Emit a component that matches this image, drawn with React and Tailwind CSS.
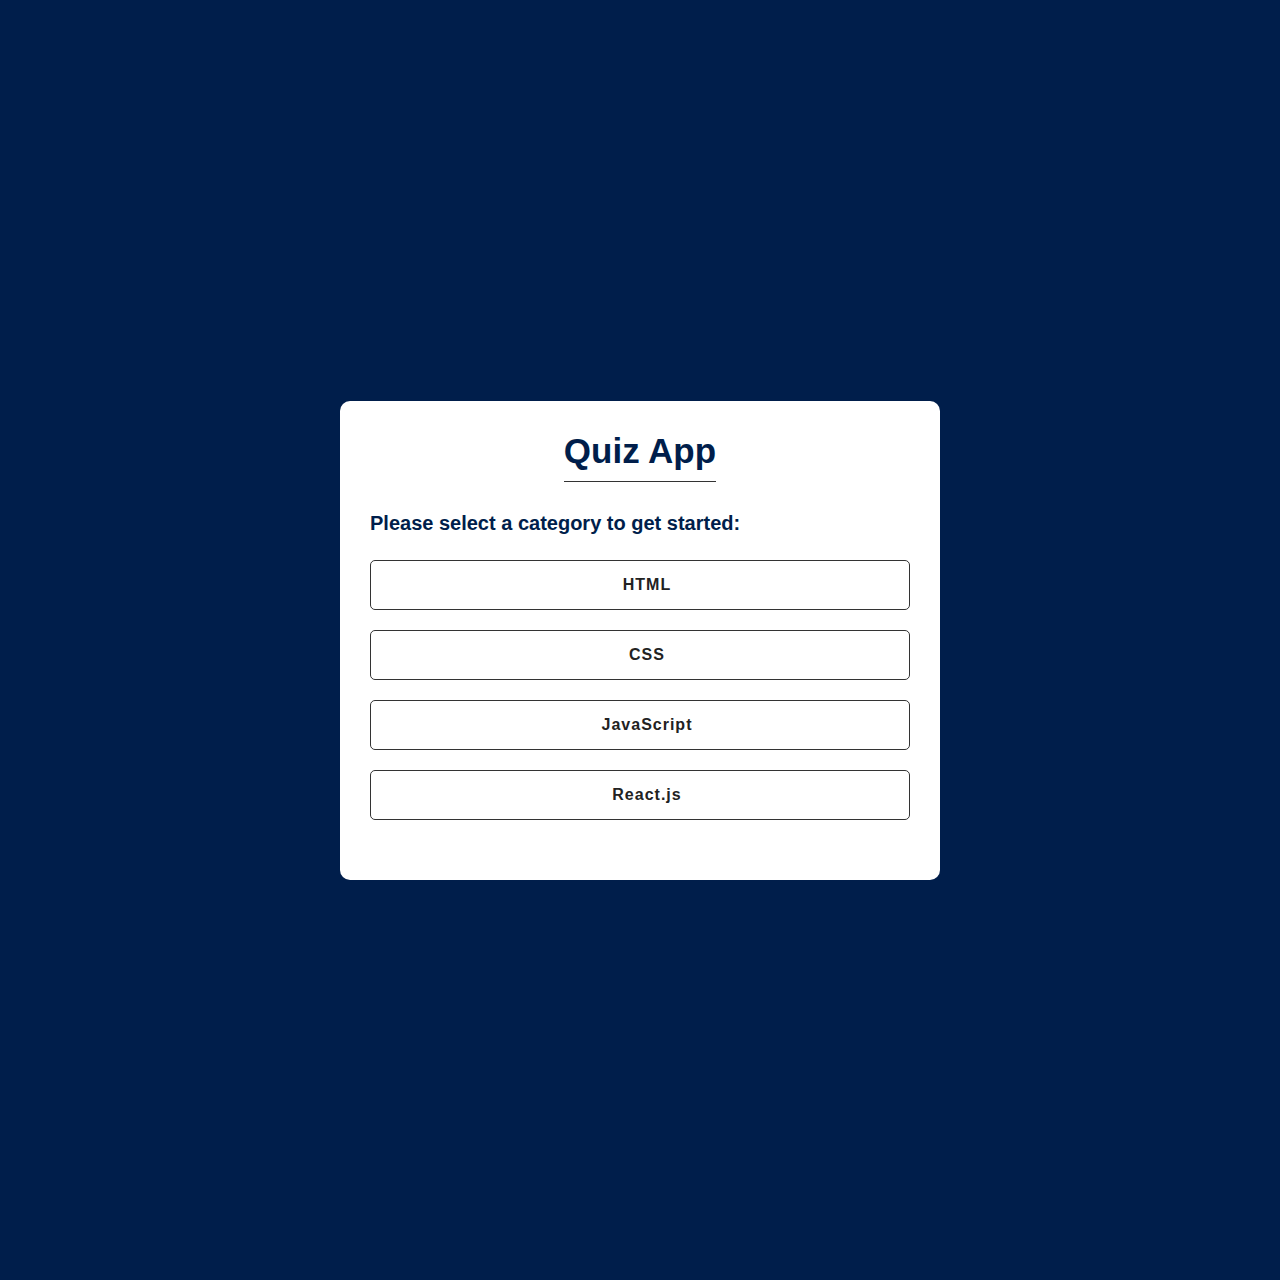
export default function App() {
  const categories = ['HTML', 'CSS', 'JavaScript', 'React.js']

  return (
    <div className="min-h-screen bg-[#001e4b] flex items-center justify-center font-['Liberation_Sans',Arial,sans-serif]">
      <div className="w-[600px] bg-white rounded-[10px] px-[30px] pt-[30px] pb-[40px]">
        <div className="text-center">
          <h1 className="inline-block text-[35px] font-bold text-[#001e4b] leading-[40px] pb-[10px] border-b border-[#333]">
            Quiz App
          </h1>
        </div>
        <h2 className="mt-[30px] mb-[25px] text-[20px] leading-[23px] font-bold text-[#001e4b]">
          Please select a category to get started:
        </h2>
        <div className="flex flex-col gap-5">
          {categories.map(c => (
            <button
              key={c}
              className="h-[50px] w-full border border-[#333] rounded-[5px] bg-white pl-[14px] text-[16px] font-bold tracking-[1px] text-[#222]"
            >
              {c}
            </button>
          ))}
        </div>
        <div className="h-5" />
      </div>
    </div>
  )
}
